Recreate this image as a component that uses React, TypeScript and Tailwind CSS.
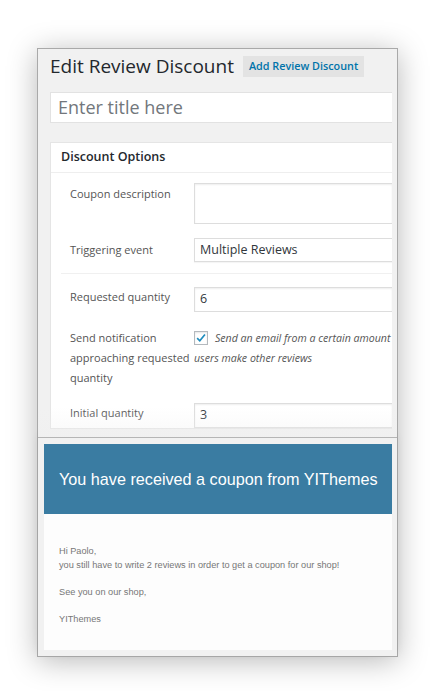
export default function App() {
  return (
    <div className="w-[434px] h-[691px] bg-white overflow-hidden pt-[48px]">
      <div className="ml-[37px] w-[361px] border border-[#a9a9a9] shadow-[0_4px_28px_rgba(0,0,0,0.28)]">
        {/* admin screen */}
        <div className="relative h-[388px] overflow-hidden bg-[#f1f1f1] pl-[12px] pr-[5px] font-['Open_Sans',sans-serif]">
          <div className="mt-[7px] flex h-[21px] items-center gap-[9px]">
            <h1 className="text-[19px] leading-[21px] text-[#23282d] whitespace-nowrap">Edit Review Discount</h1>
            <span className="bg-[#e3e3e3] px-[6px] h-[21px] flex items-center text-[10.8px] font-semibold text-[#0073aa] whitespace-nowrap">
              Add Review Discount
            </span>
          </div>
          <div className="mt-[15px] h-[31px] bg-white border border-[#e2e2e2] border-r-0 flex items-center pl-[7px] text-[18px] text-[#72777c]">
            Enter title here
          </div>
          <div className="mt-[19px] bg-white border border-[#e5e5e5] border-r-0">
            <div className="h-[30px] flex items-center pl-[10px] border-b border-[#eeeeee] text-[12.5px] font-semibold text-[#23282d]">
              Discount Options
            </div>
            <div className="pl-[10px] pt-[10px] text-[11px] text-[#555]">
              <div className="flex">
                <div className="w-[133px] pl-[9px] pt-[2px] leading-[17px]">Coupon description</div>
                <div className="flex-1 h-[41px] border border-[#dddddd] border-r-0 shadow-[inset_0_1px_2px_rgba(0,0,0,0.07)]" />
              </div>
              <div className="flex mt-[14px] items-center">
                <div className="w-[133px] pl-[9px]">Triggering event</div>
                <div className="flex-1 h-[24px] border border-[#dddddd] border-r-0 flex items-center pl-[5px] text-[12.5px] text-[#32373c] shadow-[0_1px_1px_rgba(0,0,0,0.04)]">
                  Multiple Reviews
                </div>
              </div>
              <div className="mt-[11px] border-t border-[#f0f0f0]" />
              <div className="flex mt-[13px]">
                <div className="w-[133px] pl-[9px] leading-[20px]">Requested quantity</div>
                <div className="flex-1 h-[25px] border border-[#dddddd] border-r-0 flex items-center pl-[5px] text-[12.5px] text-[#32373c] shadow-[inset_0_1px_2px_rgba(0,0,0,0.07)]">
                  6
                </div>
              </div>
              <div className="flex mt-[16px] leading-[20px]">
                <div className="w-[133px] pl-[9px]">
                  Send notification
                  <br />
                  approaching requested
                  <br />
                  quantity
                </div>
                <div className="flex-1 min-w-0 whitespace-nowrap overflow-hidden italic text-[10.6px]">
                  <div className="flex items-center">
                    <span className="shrink-0 w-[14px] h-[14px] border border-[#b4b9be] bg-white flex items-center justify-center mr-[7px] shadow-[inset_0_1px_2px_rgba(0,0,0,0.1)]">
                      <svg viewBox="0 0 14 14" className="w-[12px] h-[12px]">
                        <path d="M2.5 7.2 L5.6 10.2 L11.6 3" fill="none" stroke="#1e8cbe" strokeWidth="2" />
                      </svg>
                    </span>
                    Send an email from a certain amount of reviews
                  </div>
                  <div>users make other reviews</div>
                </div>
              </div>
              <div className="flex mt-[15px]">
                <div className="w-[133px] pl-[9px] leading-[20px]">Initial quantity</div>
                <div className="flex-1 h-[25px] border border-[#dddddd] border-r-0 flex items-center pl-[5px] text-[12.5px] text-[#32373c] shadow-[inset_0_1px_2px_rgba(0,0,0,0.07)]">
                  3
                </div>
              </div>
            </div>
          </div>
          <div className="absolute left-0 right-0 bottom-0 h-[30px] bg-gradient-to-b from-transparent to-[#efefef]/40" />
        </div>
        {/* email preview */}
        <div className="border-t border-[#b5b5b5] bg-[#f1f1f1] pl-[6px] pr-[5px] pt-[6px] pb-[6px] font-['Liberation_Sans',Arial,sans-serif] shadow-[0_-2px_8px_rgba(0,0,0,0.06)]">
          <div className="h-[70px] bg-[#3a7ca2] flex items-center pl-[15px] text-[16.2px] text-white whitespace-nowrap">
            You have received a coupon from YIThemes
          </div>
          <div className="h-[136px] bg-[#fdfdfd] pl-[15px] pt-[31px] text-[9.2px] leading-[13.5px] text-[#777]">
            <p>Hi Paolo,</p>
            <p>you still have to write 2 reviews in order to get a coupon for our shop!</p>
            <p className="mt-[13.5px]">See you on our shop,</p>
            <p className="mt-[13.5px]">YIThemes</p>
          </div>
        </div>
      </div>
    </div>
  );
}
